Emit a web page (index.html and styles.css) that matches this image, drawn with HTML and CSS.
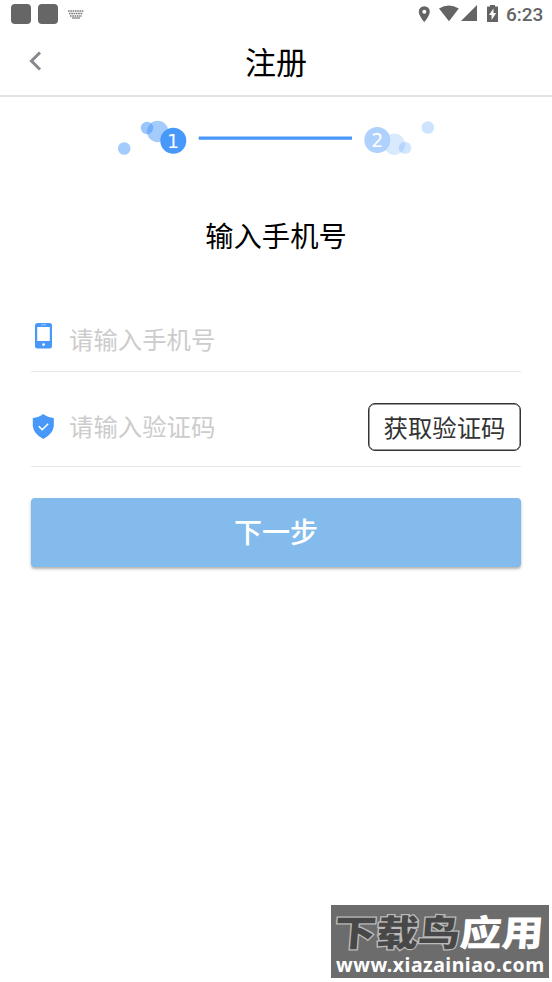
FILE: index.html
```
<!DOCTYPE html>
<html lang="zh-CN">
<head>
    <meta charset="UTF-8">
    <meta name="viewport" content="width=device-width, initial-scale=1.0">
    <title>注册</title>
    <link rel="stylesheet" href="styles.css">
</head>
<body>
    <div class="status-bar">
        <span class="app-dot"></span>
        <span class="app-dot"></span>
        <svg class="keyboard" width="16" height="9" viewBox="0 0 16 9">
            <path d="M0 1h16M1 3.5h14M2 6h12" stroke="#777" stroke-width="1.4" stroke-dasharray="1.6 .7"/>
            <path d="M4 8h8" stroke="#777" stroke-width="1.2"/>
        </svg>
        <svg class="status-icons" width="82" height="20" viewBox="0 0 82 20" fill="#646464">
            <path fill-rule="evenodd" d="M6.3 2.2a5.5 5.5 0 0 0-5.5 5.6c0 4 5.5 10.4 5.5 10.4s5.5-6.4 5.5-10.4a5.5 5.5 0 0 0-5.5-5.6zm0 3.6a2 2 0 1 1 0 4 2 2 0 0 1 0-4z"/>
            <path d="M21 4.5Q30.800 -1.500 40.800 4.500L31 17.200z"/>
            <path d="M59 1v16H43z"/>
            <path fill-rule="evenodd" d="M72 1h5v1.500h2.500q.5 0 .5.500v14.500q0 .5-.5.500h-10q-.5 0-.5-.5V3q0-.5.500-.5H72zm3.500 3.500L71 11h2.600v5l4.600-7H75.500z"/>
        </svg>
        <span class="time">6:23</span>
    </div>

    <header class="header">
        <svg class="back" width="14" height="20" viewBox="0 0 14 20">
            <path d="M12 1.500L3.500 10l8.500 8.500" fill="none" stroke="#85888c" stroke-width="3"/>
        </svg>
        <h1>注册</h1>
    </header>

    <main class="content">
        <svg class="steps" width="320" height="40" viewBox="0 0 320 40">
            <g fill="#4898fa">
                <circle cx="8.200" cy="30.500" r="6.300" opacity=".5"/>
                <circle cx="41.700" cy="13.500" r="10.700" opacity=".5"/>
                <circle cx="31" cy="10" r="6.200" opacity=".55"/>
                <circle cx="57.300" cy="22.800" r="13"/>
                <path d="M82.700 18.400h153.300v3.300H82.700z"/>
                <circle cx="278.300" cy="26.300" r="10.700" opacity=".2"/>
                <circle cx="289" cy="29.900" r="6.200" opacity=".25"/>
                <circle cx="311.800" cy="9.500" r="6.300" opacity=".27"/>
            </g>
            <circle cx="261.300" cy="22" r="13" fill="#aed1fd"/>
            <text x="57" y="30" class="step-num">1</text>
            <text x="261.300" y="29" class="step-num">2</text>
        </svg>

        <h2>输入手机号</h2>

        <form>
            <div class="field phone-field">
                <svg class="field-icon" width="26" height="28" viewBox="0 0 26 28">
                    <rect x="4" y="1" width="17" height="25.500" rx="2.500" fill="#4898fa"/>
                    <path d="M6.200 5h12.600v14H6.200z" fill="#fff"/>
                    <path d="M10 2.800h5" stroke="#a7ccfc"/>
                    <circle cx="12.600" cy="22.600" r="1.400" fill="#fff"/>
                </svg>
                <input type="tel" placeholder="请输入手机号">
            </div>
            <div class="field code-field">
                <svg class="field-icon" width="26" height="28" viewBox="0 0 26 28">
                    <path d="M12.300 1Q16.500 4.500 22.800 5v8Q22 21 12.300 26 2.700 21 1.800 13V5Q8 4.500 12.300 1z" fill="#4898fa"/>
                    <path d="M7.800 13.200l3.400 3.500 6-6" fill="none" stroke="#fff" stroke-width="1.500"/>
                </svg>
                <input type="text" placeholder="请输入验证码">
                <button type="button" class="code-btn">获取验证码</button>
            </div>
            <button type="submit" class="next-btn">下一步</button>
        </form>
    </main>

    <div class="watermark">
        <div class="wm-name"><span class="wm-dark">下载鸟</span><span>应用</span></div>
        <div class="wm-url">www.xiazainiao.com</div>
    </div>
</body>
</html>
```

FILE: styles.css
```
* {
    box-sizing: border-box;
}

body {
    position: relative;
    height: 982px;
    margin: 0;
    overflow: hidden;
    background: #fff;
    color: #000;
    font-family: "Noto Sans CJK SC", sans-serif;
}

/* Barre de statut */
.status-bar {
    display: flex;
    align-items: center;
    height: 28px;
    padding: 0 9px 0 11px;
}

.app-dot {
    width: 20px;
    height: 20px;
    margin-right: 7px;
    border-radius: 4px;
    background: #666;
}

.keyboard {
    margin-left: 3px;
}

.status-icons {
    margin: 0 0 1px auto;
}

.time {
    width: 37px;
    margin-left: 6px;
    padding-top: 1px;
    color: #646464;
    font: 500 19px/28px Roboto, sans-serif;
    text-align: right;
}

/* En-tête */
.header {
    display: grid;
    grid-template-columns: 50px 1fr 50px;
    align-items: center;
    height: 69px;
    border-bottom: 2px solid #e3e3e3;
}

.back {
    margin: 0 0 2px 28px;
}

h1 {
    margin: 0;
    font-size: 31px;
    font-weight: 400;
    line-height: 65px;
    height: 67px;
    text-align: center;
}

.content {
    padding: 21px 31px 0;
}

.steps {
    display: block;
    margin-left: 85px;
}

.step-num {
    fill: #fff;
    font: 19px "DejaVu Sans", sans-serif;
    text-anchor: middle;
}

h2 {
    margin: 57px 0 0;
    font-size: 28.3px;
    font-weight: 400;
    line-height: 40px;
    text-align: center;
}

/* Formulaire */
.field {
    display: flex;
    align-items: center;
    border-bottom: 1px solid #e7e7e7;
}

.phone-field {
    height: 66px;
    margin-top: 51px;
}

.phone-field .field-icon {
    margin-bottom: 6px;
}

.code-field {
    height: 95px;
    padding-top: 15px;
}

.field-icon {
    flex: none;
}

input {
    flex: 1;
    min-width: 0;
    height: 40px;
    padding: 0 0 0 12px;
    border: none;
    outline: none;
    background: none;
    font: 24.4px "Noto Sans CJK SC", sans-serif;
}

.code-field input {
    margin-bottom: 2px;
}

input::placeholder {
    color: #ccc;
}

.code-btn {
    width: 153px;
    height: 48px;
    padding: 0;
    border: 1px solid #333;
    border-radius: 7px;
    background: #fff;
    box-shadow: inset 0 0 0 0.5px #333;
    color: #333;
    font: 24.4px/44px "Noto Sans CJK SC", sans-serif;
}

.next-btn {
    display: block;
    width: 100%;
    height: 69px;
    margin-top: 31px;
    padding: 0 0 2px;
    border: none;
    border-radius: 4px;
    background: #83bbec;
    box-shadow: 0 2px 3px rgba(0, 0, 0, 0.3);
    color: #fff;
    font: 500 28px/67px "Noto Sans CJK SC", sans-serif;
}

.watermark {
    position: absolute;
    left: 331px;
    top: 905px;
    width: 218px;
    height: 73px;
    background: #6c6c6c;
    color: #fff;
    white-space: nowrap;
}

.wm-name {
    width: 180px;
    height: 48px;
    margin-left: 4px;
    font: 900 36px/58px "Liberation Sans", "Noto Sans CJK SC", sans-serif;
    transform: scaleX(1.16) skewX(-4deg);
    transform-origin: left center;
}

.wm-dark {
    color: #484848;
    -webkit-text-stroke: 2.5px #bbb;
    paint-order: stroke fill;
}

.wm-url {
    padding-left: 5px;
    font: 700 19.5px/24px "Noto Sans", sans-serif;
    letter-spacing: 0.5px;
}
```
